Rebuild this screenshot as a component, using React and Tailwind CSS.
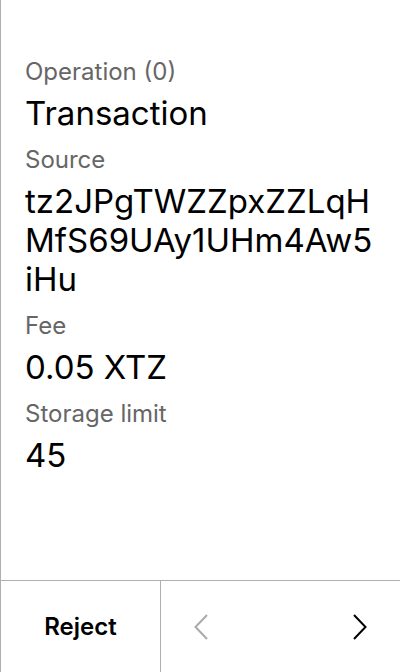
const FIELDS = [
  { label: "Operation (0)", value: "Transaction" },
  { label: "Source", value: "tz2JPgTWZZpxZZLqHMfS69UAy1UHm4Aw5iHu" },
  { label: "Fee", value: "0.05 XTZ" },
  { label: "Storage limit", value: "45" },
]

function Chevron({ dir, className }) {
  return (
    <svg width="14" height="26" viewBox="0 0 14 26" className={className}>
      <path
        d={dir === "left" ? "M13 1 L1.5 13 L13 25" : "M1 1 L12.5 13 L1 25"}
        fill="none"
        stroke="currentColor"
        strokeWidth="2"
      />
    </svg>
  )
}

export default function App() {
  return (
    <div className="flex flex-col h-[672px] w-[400px] bg-white border-l border-[#b0b0b0] font-['Inter',sans-serif]">

      {/* fields */}
      <div className="flex-1 px-6 pt-[56px]">
        {FIELDS.map(f => (
          <div key={f.label} className="mb-[11px]">
            <div className="text-[24px] leading-[32px] text-[#666]">{f.label}</div>
            <div className="text-[33px] leading-[39px] text-black break-all mt-[6px]">{f.value}</div>
          </div>
        ))}
      </div>

      {/* bottom bar */}
      <div className="flex h-[92px] border-t border-[#b0b0b0]">
        <button className="w-[160px] border-r border-[#b0b0b0] text-[24px] font-semibold text-black">
          Reject
        </button>
        <div className="flex-1 flex items-center justify-between px-[33px]">
          <Chevron dir="left" className="text-[#aaa]" />
          <Chevron dir="right" className="text-black" />
        </div>
      </div>

    </div>
  )
}
